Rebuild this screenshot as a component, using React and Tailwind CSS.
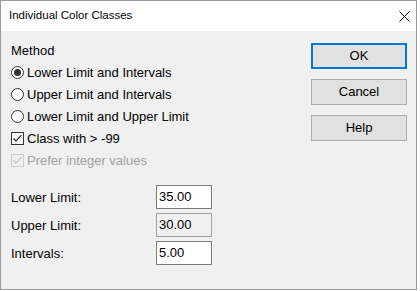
import React from 'react';

const font = { fontFamily: '"Liberation Sans", Arial, sans-serif' };

const Radio = ({ checked, label }) => (
  <div className="flex items-center h-[22px]">
    <span className="w-[13px] h-[13px] rounded-full border border-[#333] bg-white flex items-center justify-center">
      {checked && <span className="w-[7px] h-[7px] rounded-full bg-[#333]" />}
    </span>
    <span className="ml-[3px] text-[13px] text-black leading-none">{label}</span>
  </div>
);

const Check = ({ checked, disabled, label }) => (
  <div className="flex items-center h-[22px]">
    <span
      className={`w-[13px] h-[13px] border flex items-center justify-center ${
        disabled ? 'border-[#cccccc] bg-[#f0f0f0]' : 'border-[#333] bg-white'
      }`}
    >
      {checked && (
        <svg width="11" height="11" viewBox="0 0 11 11">
          <path
            d="M1.5 5.5 L4 8 L9.5 2.2"
            fill="none"
            stroke={disabled ? '#c0c0c0' : '#222'}
            strokeWidth="1.2"
          />
        </svg>
      )}
    </span>
    <span className={`ml-[3px] text-[13px] leading-none ${disabled ? 'text-[#a0a0a0]' : 'text-black'}`}>
      {label}
    </span>
  </div>
);

const Field = ({ label, value, disabled }) => (
  <div className="flex items-center h-[24px]">
    <span className="w-[145px] text-[13px] text-black leading-none">{label}</span>
    <div
      className={`w-[56px] h-[24px] border flex items-center pl-[2px] text-[13px] text-black ${
        disabled ? 'border-[#a0a0a0] bg-[#f0f0f0]' : 'border-[#7a7a7a] bg-white'
      }`}
    >
      {value}
    </div>
  </div>
);

const Button = ({ children, primary }) => (
  <button
    className={`w-[96px] h-[26px] flex items-center justify-center text-[13px] text-black bg-[#e1e1e1] ${
      primary ? 'border-2 border-[#0078d7]' : 'border border-[#adadad]'
    }`}
    style={font}
  >
    {children}
  </button>
);

export default function App() {
  return (
    <div className="w-[420px] h-[291px] bg-white" style={font}>
      <div className="w-[417px] h-[290px] border border-[#9a9a9a] flex flex-col bg-[#f0f0f0]">
        {/* title bar */}
        <div className="h-[30px] bg-white flex items-center justify-between pl-[8px] pr-[6px]">
          <span className="text-[11.5px] text-black">Individual Color Classes</span>
          <svg width="11" height="11" viewBox="0 0 11 11">
            <path d="M0.5 0.5 L10.5 10.5 M10.5 0.5 L0.5 10.5" stroke="#000" strokeWidth="1" />
          </svg>
        </div>

        <div className="flex flex-1">
          <div className="flex-1 pl-[10px] pt-[10px]">
            <div className="h-[20px] flex items-center text-[13px] text-black">Method</div>
            <Radio checked label="Lower Limit and Intervals" />
            <Radio label="Upper Limit and Intervals" />
            <Radio label="Lower Limit and Upper Limit" />
            <Check checked label="Class with > -99" />
            <Check checked disabled label="Prefer integer values" />

            <div className="mt-[14px] flex flex-col gap-[4px]">
              <Field label="Lower Limit:" value="35.00" />
              <Field label="Upper Limit:" value="30.00" disabled />
              <Field label="Intervals:" value="5.00" />
            </div>
          </div>

          <div className="w-[96px] mr-[9px] pt-[12px] flex flex-col gap-[10px]">
            <Button primary>OK</Button>
            <Button>Cancel</Button>
            <Button>Help</Button>
          </div>
        </div>
      </div>
    </div>
  );
}
